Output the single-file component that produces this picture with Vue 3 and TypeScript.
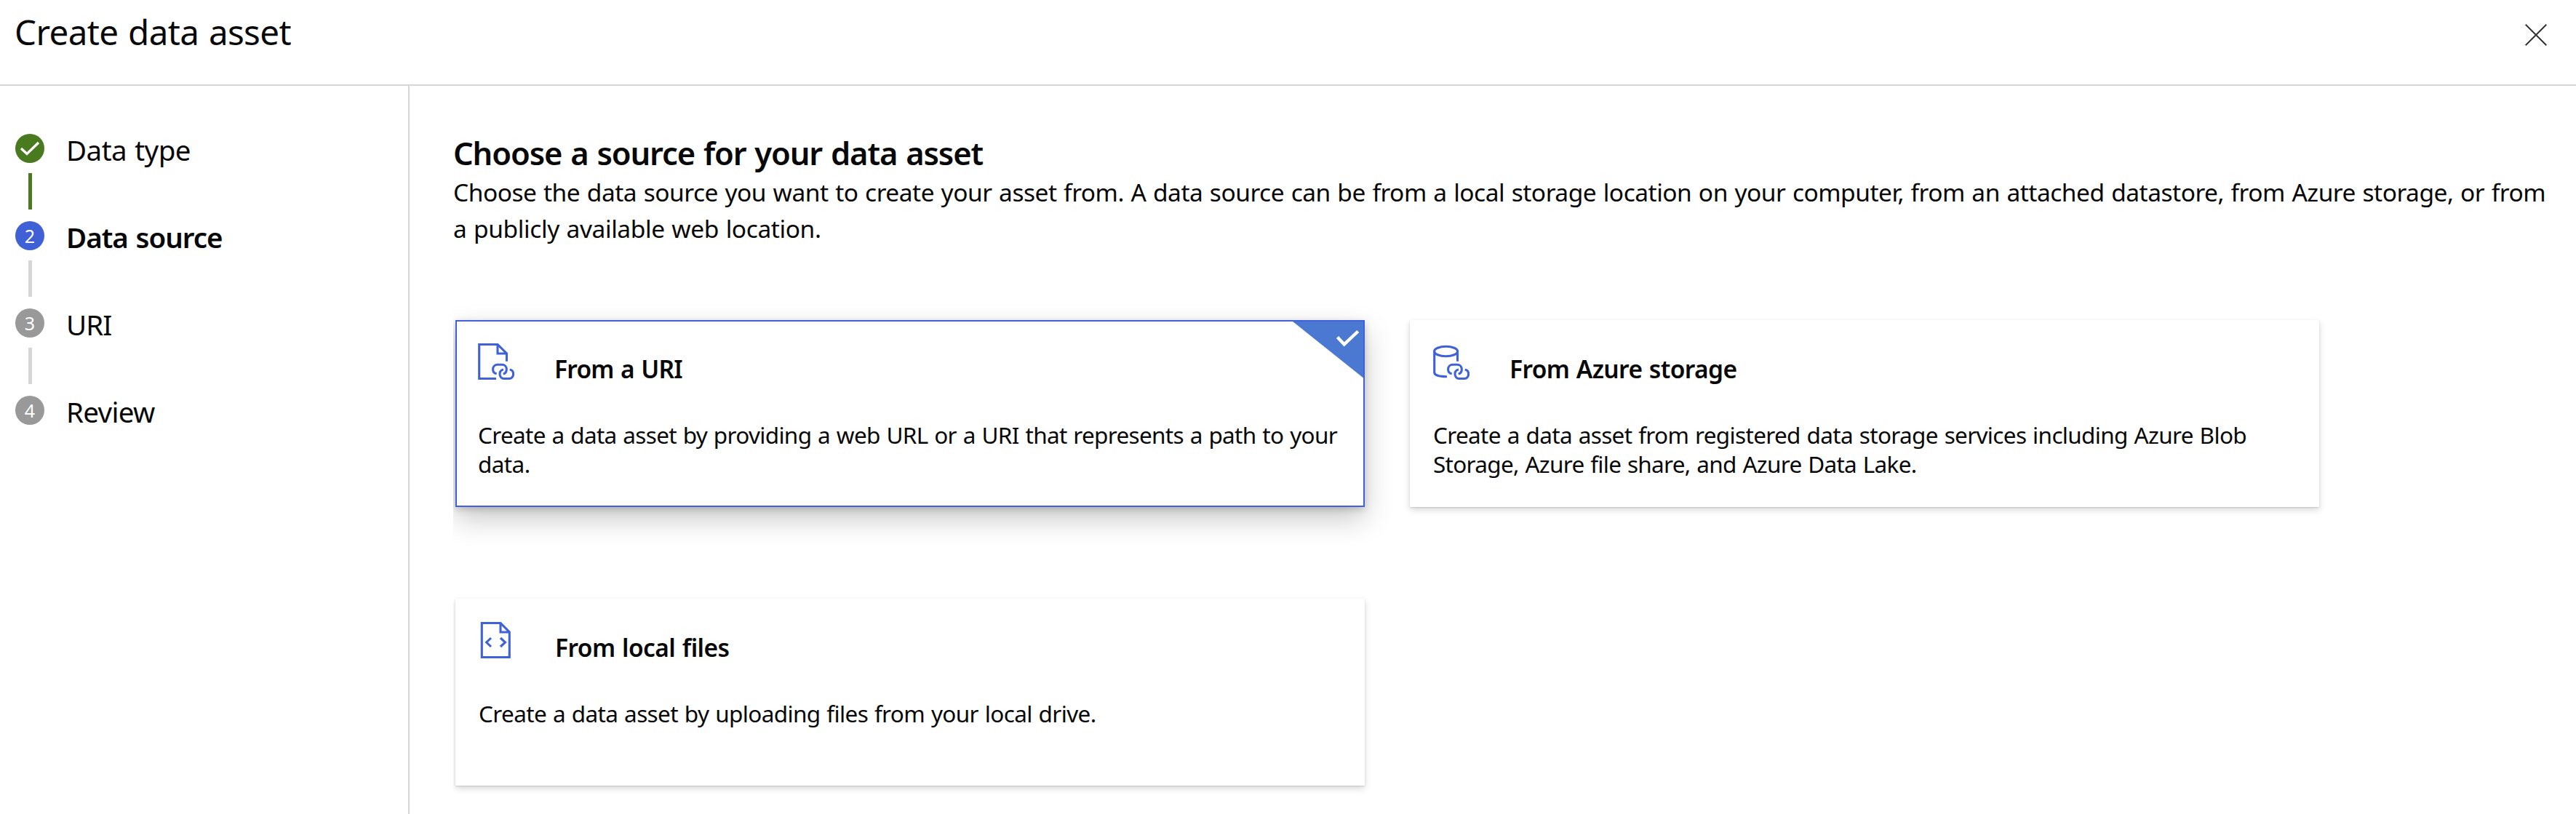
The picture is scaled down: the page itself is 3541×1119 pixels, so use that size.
<script setup lang="ts">
interface Step { label: string; width: number; state: 'done' | 'current' | 'todo' }
interface Line { text: string; width: number }
interface Card { icon: 'fileLink' | 'dbLink' | 'fileCode'; title: Line; lines: Line[]; selected?: boolean }

// Tracks a single line of text so that it takes the given width.
const vFit = {
  mounted(el: HTMLElement, binding: { value: number }) {
    const natural = el.getBoundingClientRect().width
    const count = (el.textContent ?? '').length
    if (count > 0) el.style.letterSpacing = `${(binding.value - natural) / count}px`
  },
}

const steps: Step[] = [
  { label: 'Data type', width: 171, state: 'done' },
  { label: 'Data source', width: 214.5, state: 'current' },
  { label: 'URI', width: 62.5, state: 'todo' },
  { label: 'Review', width: 121.5, state: 'todo' },
]

const intro: Line[] = [
  { text: 'Choose the data source you want to create your asset from. A data source can be from a local storage location on your computer, from an attached datastore, from Azure storage, or from', width: 2876 },
  { text: 'a publicly available web location.', width: 505.5 },
]

const cards: Card[] = [
  {
    icon: 'fileLink',
    selected: true,
    title: { text: 'From a URI', width: 176 },
    lines: [
      { text: 'Create a data asset by providing a web URL or a URI that represents a path to your', width: 1181 },
      { text: 'data.', width: 71.5 },
    ],
  },
  {
    icon: 'dbLink',
    title: { text: 'From Azure storage', width: 312.5 },
    lines: [
      { text: 'Create a data asset from registered data storage services including Azure Blob', width: 1118 },
      { text: 'Storage, Azure file share, and Azure Data Lake.', width: 664.5 },
    ],
  },
  {
    icon: 'fileCode',
    title: { text: 'From local files', width: 239.5 },
    lines: [{ text: 'Create a data asset by uploading files from your local drive.', width: 848.5 }],
  },
]
</script>

<template>
  <div class="page">
    <header class="header">
      <h1 class="title"><span v-fit="380">Create data asset</span></h1>
      <svg class="close" width="30" height="30" viewBox="0 0 30 30"><path d="M.7 .7L29.300 29.300M29.300 .7L.7 29.300" /></svg>
    </header>
    <div class="body">
      <nav class="steps">
        <div v-for="(s, i) in steps" :key="s.label" class="step" :class="s.state">
          <div class="rail">
            <div class="dot">
              <svg v-if="s.state === 'done'" width="40" height="40" viewBox="0 0 40 40"><path d="M8 20L16 27.500L32 12" /></svg>
              <span v-else>{{ i + 1 }}</span>
            </div>
            <div v-if="i < steps.length - 1" class="bar"></div>
          </div>
          <div class="label"><span v-fit="s.width">{{ s.label }}</span></div>
        </div>
      </nav>
      <main class="main">
        <h2 class="heading"><span v-fit="728">Choose a source for your data asset</span></h2>
        <div v-for="l in intro" :key="l.text" class="intro"><span v-fit="l.width">{{ l.text }}</span></div>
        <div class="cards">
          <section v-for="c in cards" :key="c.title.text" class="card" :class="{ selected: c.selected }">
            <svg v-if="c.selected" class="corner" width="97" height="78" viewBox="0 0 97 78">
              <path class="flag" d="M0 0H97V77.500Z" />
              <path class="tick" d="M61.500 21.500L70.700 31.300L89.700 13.500" />
            </svg>
            <div class="top">
              <svg class="icon" width="50" height="50" viewBox="0 0 50 50">
                <template v-if="c.icon === 'fileLink'">
                  <path d="M25 48.500H1.700V1.500H27L39.500 14V24.700M27 1.500V14H39.500" />
                </template>
                <template v-else-if="c.icon === 'dbLink'">
                  <ellipse cx="17.600" cy="11" rx="16" ry="6.700" />
                  <path d="M1.700 11V40C1.700 43.500 8 45.700 19 45.700M33.500 11V24.700" />
                </template>
                <template v-else>
                  <path d="M4.300 1.500H30L42.300 14V48.500H4.300ZM30 1.500V14H42.300" />
                  <path d="M17 22L10.700 28L17 34M30 22L36.500 28L30 34" />
                </template>
                <template v-if="c.icon !== 'fileCode'">
                  <path d="M25.700 41.700C22.500 41.300 20.600 39 20.600 35.700C20.600 32 23.300 29.300 27 29.300H33C36.700 29.300 39.300 32 39.300 35.700C39.300 39 37.500 41.500 34.700 42" />
                  <path d="M35 36C32 36.500 30 39 30 42.200C30 46 32.700 48.500 36.300 48.500H42.300C46 48.500 48.600 46 48.600 42.200C48.600 39 46.700 36.500 43.700 36" />
                </template>
              </svg>
              <h3 class="card-title"><span v-fit="c.title.width">{{ c.title.text }}</span></h3>
            </div>
            <div v-for="l in c.lines" :key="l.text" class="desc"><span v-fit="l.width">{{ l.text }}</span></div>
          </section>
        </div>
      </main>
    </div>
  </div>
</template>

<style>
body { background: #fff; }
</style>
<style scoped>
.page { width: 3541px; height: 1119px; overflow: hidden; font-family: "Noto Sans", "Open Sans", sans-serif; background: #fff; color: #080808; }
svg { display: block; fill: none; }
h1, h2, h3 { margin: 0; }
span { display: inline-block; white-space: nowrap; word-spacing: .04em; }
.header { height: 116px; border-bottom: 2px solid #d6d6d6; display: flex; justify-content: space-between; padding: 0 40px 0 20px; }
.title { margin-top: 14px; font-size: 47.500px; line-height: 60px; font-weight: 400; }
.close { margin-top: 33px; stroke: #333; stroke-width: 2; }
.body { display: flex; height: 1001px; }
.steps { flex: none; width: 540px; padding: 66px 0 0 21px; height: 935px; border-right: 2px solid #d6d6d6; }
.step { display: flex; height: 120px; }
.dot { width: 40px; height: 40px; border-radius: 50%; background: #999; color: #fff; font-size: 25px; text-align: center; line-height: 41px; }
.dot path { stroke: #fff; stroke-width: 3.400; }
.bar { width: 5px; height: 50px; margin: 14px 0 0 18px; background: #d6d6d6; }
.done .dot, .done .bar { background: #4a7a1f; }
.current .dot { background: #4060d6; }
.label { margin-left: 30px; font-size: 38.500px; line-height: 44px; }
.current .label { font-weight: 600; }
.main { padding: 63px 0 0 60px; }
.heading { font-size: 43.500px; line-height: 58px; font-weight: 600; }
.intro { font-size: 33.500px; line-height: 50px; }
.cards { display: grid; grid-template-columns: 1250px 1250px; gap: 126px 62px; margin: 101px 0 0 3px; clip-path: inset(-100px -100px -100px -3px); }
.card { position: relative; height: 257px; box-sizing: border-box; padding: 31px 0 0 32px; background: #fff; box-shadow: 0 4px 9px rgba(0, 0, 0, .15), 0 1px 2px rgba(0, 0, 0, .14); }
.selected { padding: 29px 0 0 29px; border: 2px solid #4062d8; box-shadow: 0 16px 36px rgba(0, 0, 0, .22), 0 3px 9px rgba(0, 0, 0, .18); }
.corner { position: absolute; top: 0; right: 0; }
.flag { fill: #4b78d0; }
.tick { stroke: #fff; stroke-width: 4.400; }
.top { display: flex; height: 106.500px; }
.icon { margin-top: 1px; stroke: #4062d8; stroke-width: 3.100; }
.card-title { font-size: 33.500px; line-height: 51px; font-weight: 600; margin: 10.500px 0 0 55px; }
.desc { font-size: 31.500px; line-height: 40px; }
</style>
